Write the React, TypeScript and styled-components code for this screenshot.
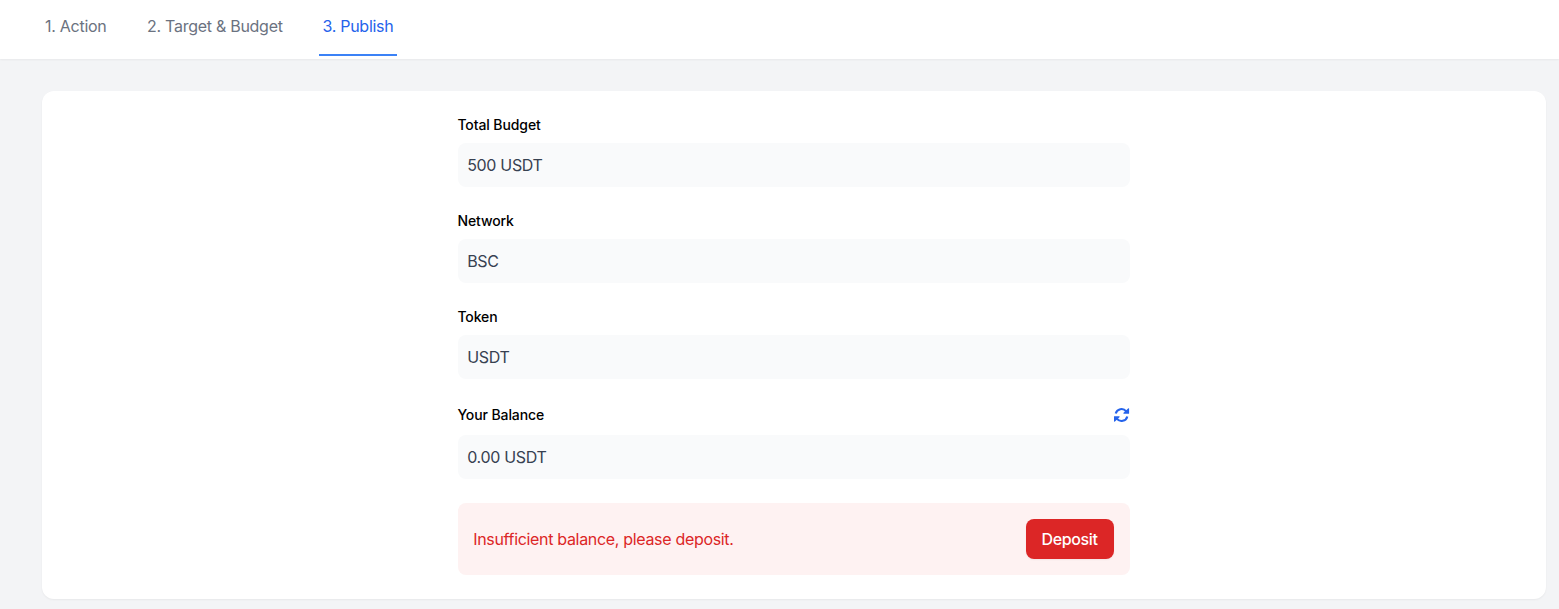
import React from "react";
import styled, { createGlobalStyle } from "styled-components";

const GlobalStyle = createGlobalStyle`
  *, *::before, *::after { box-sizing: border-box; }
  body {
    margin: 0;
    background: #f3f4f6;
    color: #000;
    font-family: Inter, "Liberation Sans", sans-serif;
    font-size: 16px;
    line-height: 24px;
    letter-spacing: -0.32px;
  }
`;

const Page = styled.div`
  min-height: 609px;
`;

const Header = styled.header`
  height: 59px;
  padding: 0 41px;
  background: #fff;
  box-shadow: 0 1px 2px rgba(0, 0, 0, 0.05);
`;

const Tabs = styled.nav`
  display: flex;
  gap: 32px;
`;

const Tab = styled.a<{ $active?: boolean; $width: number }>`
  width: ${(p) => p.$width}px;
  height: 56px;
  padding: 14px 0 0 ${(p) => (p.$active ? 3.4 : 4)}px;
  white-space: nowrap;
  letter-spacing: ${(p) => (p.$active ? -0.27 : -0.27)}px;
  color: ${(p) => (p.$active ? "#2563eb" : "#6b7280")};
  border-bottom: 2px solid ${(p) => (p.$active ? "#3b82f6" : "transparent")};
`;

const Card = styled.main`
  margin: 32px 13px 0 42px;
  padding: 24px;
  border-radius: 12px;
  background: #fff;
  box-shadow: 0 1px 2px rgba(0, 0, 0, 0.05);
`;

const Form = styled.div`
  display: flex;
  flex-direction: column;
  gap: 24px;
  width: 672px;
  margin: 0 auto;
`;

const Field = styled.div`
  display: flex;
  flex-direction: column;
  gap: 8px;
`;

const LabelRow = styled.div`
  display: flex;
  align-items: center;
  justify-content: space-between;
`;

const Label = styled.span`
  margin-left: -0.6px;
  font-size: 14px;
  line-height: 20px;
  font-weight: 500;
  letter-spacing: -0.1px;
`;

const Refresh = styled.button`
  display: flex;
  align-items: center;
  height: 24px;
  padding: 0;
  border: 0;
  background: none;
  color: #2563eb;
`;

const Value = styled.div`
  height: 44px;
  padding: 10px 9.2px;
  border-radius: 8px;
  background: #f9fafb;
  color: #374151;
`;

const Alert = styled.div`
  display: flex;
  align-items: center;
  justify-content: space-between;
  padding: 16px 16px 16px 15.2px;
  border-radius: 8px;
  background: #fef2f2;
  color: #dc2626;
`;

const DepositButton = styled.button`
  width: 88px;
  height: 40px;
  padding: 0 1px 0 0;
  border: 0;
  border-radius: 8px;
  background: #dc2626;
  color: #fff;
  font: inherit;
  font-weight: 500;
  letter-spacing: -0.36px;
  box-shadow: 0 1px 2px rgba(0, 0, 0, 0.05);
`;

const details = [
  { label: "Total Budget", value: "500 USDT" },
  { label: "Network", value: "BSC" },
  { label: "Token", value: "USDT" },
];

function RefreshIcon() {
  return (
    <svg width="16" height="16" viewBox="0 0 16 16" fill="none">
      <path
        d="M1.7 6.6A6 6 0 0 1 12.2 4.3M13.3 9.4A6 6 0 0 1 2.8 11.7"
        stroke="currentColor"
        strokeWidth="2.1"
      />
      <path
        d="M15.1 1.6V6.5L14.8 6.8H9.6L9.3 6.1L14.3 1.2ZM-.1 14.4V9.5L.2 9.2H5.4L5.7 9.9L.7 14.8Z"
        fill="currentColor"
      />
    </svg>
  );
}

export default function App() {
  return (
    <Page>
      <GlobalStyle />
      <Header>
        <Tabs>
          <Tab $width={70}>1. Action</Tab>
          <Tab $width={144}>2. Target &amp; Budget</Tab>
          <Tab $width={78} $active>3. Publish</Tab>
        </Tabs>
      </Header>
      <Card>
        <Form>
          {details.map((d) => (
            <Field key={d.label}>
              <Label>{d.label}</Label>
              <Value>{d.value}</Value>
            </Field>
          ))}
          <Field>
            <LabelRow>
              <Label>Your Balance</Label>
              <Refresh aria-label="Refresh balance">
                <RefreshIcon />
              </Refresh>
            </LabelRow>
            <Value>0.00 USDT</Value>
          </Field>
          <Alert>
            <span>Insufficient balance, please deposit.</span>
            <DepositButton>Deposit</DepositButton>
          </Alert>
        </Form>
      </Card>
    </Page>
  );
}
